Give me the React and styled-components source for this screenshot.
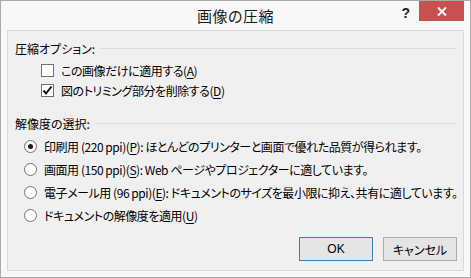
import React from 'react';
import styled, { createGlobalStyle } from 'styled-components';

const Global = createGlobalStyle`
  html, body { margin: 0; padding: 0; background: #f8f8f8; }
  * { box-sizing: border-box; }
`

const Window = styled.div`
  width: 471px;
  height: 278px;
  border: 1px solid #aaaaaa;
  background: #f8f8f8;
  display: flex;
  flex-direction: column;
  font-family: "Noto Sans CJK JP", "Noto Sans", sans-serif;
  font-feature-settings: "palt";
  color: #000;
`

const TitleBar = styled.div`
  height: 29px;
  display: grid;
  grid-template-columns: 1fr auto 1fr;
  align-items: start;
`

const Title = styled.div`
  grid-column: 2;
  font-size: 15px;
  line-height: 29px;
  color: #1a1a1a;
  letter-spacing: 0.5px;
`

const Controls = styled.div`
  grid-column: 3;
  justify-self: end;
  display: flex;
  align-items: flex-start;
  gap: 9px;
  margin-right: 6px;
`

const Help = styled.div`
  font-family: "Liberation Sans", sans-serif;
  font-weight: bold;
  font-size: 14px;
  line-height: 24px;
  color: #222;
`

const Close = styled.div`
  width: 45px;
  height: 20px;
  background: #c75050;
  display: flex;
  align-items: center;
  justify-content: center;
`

const Client = styled.div`
  flex: 1;
  margin: 0 6px 6px 6px;
  border: 1px solid #d9d9d9;
  background: #f0f0f0;
  padding: 7px 6px 9px 7px;
  display: flex;
  flex-direction: column;
`

const GroupHeader = styled.div`
  height: 20px;
  display: flex;
  align-items: center;
  gap: 5px;
  font-size: 12px;
  margin-top: ${p => p.$top || 0}px;
`

const Rule = styled.div`
  flex: 1;
  height: 1px;
  background: #dcdcdc;
`

const List = styled.div`
  display: flex;
  flex-direction: column;
  margin-top: 2px;
  padding-left: ${p => p.$indent}px;
`

const Row = styled.div`
  height: ${p => p.$h}px;
  display: flex;
  align-items: center;
  gap: 7px;
  font-size: 12px;
  letter-spacing: -0.45px;
  white-space: nowrap;
`

const Box = styled.div`
  flex-shrink: 0;
  width: 13px;
  height: 13px;
  border: 1px solid #707070;
  background: #fff;
  display: flex;
  align-items: center;
  justify-content: center;
`

const Radio = styled.div`
  flex-shrink: 0;
  width: 13px;
  height: 13px;
  border-radius: 50%;
  border: 1px solid #707070;
  background: #fff;
  display: flex;
  align-items: center;
  justify-content: center;
  &::after {
    content: '';
    width: 5px;
    height: 5px;
    border-radius: 50%;
    background: ${p => (p.$on ? '#1a1a1a' : 'transparent')};
  }
`

const Key = styled.span`
  text-decoration: underline;
  text-underline-offset: 2px;
`

const Buttons = styled.div`
  margin-top: auto;
  display: flex;
  justify-content: flex-end;
  gap: 10px;
`

const Button = styled.div`
  width: 74px;
  height: 24px;
  border: 1px solid ${p => (p.$primary ? '#3c7fb1' : '#acacac')};
  background: #e5e5e5;
  display: flex;
  align-items: center;
  justify-content: center;
  font-size: 12px;
  font-family: ${p => (p.$latin ? '"Liberation Sans", sans-serif' : 'inherit')};
`

const Check = () => (
  <svg width="11" height="11" viewBox="0 0 11 11">
    <path d="M1.5 5.5 L4 8.5 L9.5 1.5" fill="none" stroke="#111" strokeWidth="2" />
  </svg>
)

const CloseX = () => (
  <svg width="10" height="9" viewBox="0 0 10 9">
    <path d="M1 0.5 L9 8.5 M9 0.5 L1 8.5" stroke="#fff" strokeWidth="2" />
  </svg>
)

const radios = [
  { on: true, text: ['印刷用 (220 ppi)(', 'P', '): ほとんどのプリンターと画面で優れた品質が得られます。'] },
  { on: false, text: ['画面用 (150 ppi)(', 'S', '): Web ページやプロジェクターに適しています。'] },
  { on: false, text: ['電子メール用 (96 ppi)(', 'E', '): ドキュメントのサイズを最小限に抑え、共有に適しています。'] },
  { on: false, text: ['ドキュメントの解像度を適用(', 'U', ')'] },
]

export default function App() {
  return (
    <>
      <Global />
      <Window>
        <TitleBar>
          <Title>画像の圧縮</Title>
          <Controls>
            <Help>?</Help>
            <Close><CloseX /></Close>
          </Controls>
        </TitleBar>
        <Client>
          <GroupHeader>
            圧縮オプション:
            <Rule />
          </GroupHeader>
          <List $indent={26}>
            <Row $h={20}>
              <Box />
              <span>この画像だけに適用する(<Key>A</Key>)</span>
            </Row>
            <Row $h={20}>
              <Box><Check /></Box>
              <span>図のトリミング部分を削除する(<Key>D</Key>)</span>
            </Row>
          </List>
          <GroupHeader $top={13}>
            解像度の選択:
            <Rule />
          </GroupHeader>
          <List $indent={9}>
            {radios.map((r, i) => (
              <Row $h={23} key={i}>
                <Radio $on={r.on} />
                <span>{r.text[0]}<Key>{r.text[1]}</Key>{r.text[2]}</span>
              </Row>
            ))}
          </List>
          <Buttons>
            <Button $primary $latin>OK</Button>
            <Button>キャンセル</Button>
          </Buttons>
        </Client>
      </Window>
    </>
  );
}
